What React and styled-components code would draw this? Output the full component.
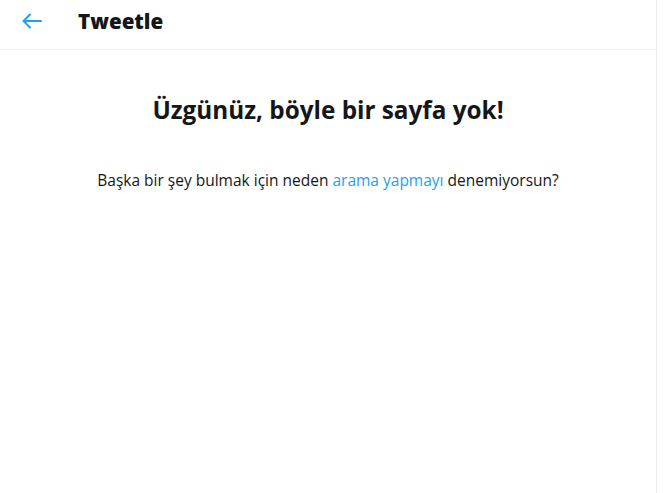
import React from "react";
import styled, { createGlobalStyle } from "styled-components";

const GlobalStyle = createGlobalStyle`
  html, body {
    margin: 0;
    padding: 0;
    background: #fff;
  }
  body {
    font-family: "Open Sans", "Noto Sans", sans-serif;
    color: #14171a;
  }
`;

const Column = styled.div`
  width: 656px;
  min-height: 493px;
  border-right: 1px solid #ebeef0;
  display: flex;
  flex-direction: column;
`;

const Header = styled.header`
  height: 41px;
  padding: 0 15px 8px 20px;
  border-bottom: 1px solid #ebeef0;
  display: flex;
  align-items: center;
`;

const BackButton = styled.button`
  width: 24px;
  height: 24px;
  border: none;
  background: transparent;
  padding: 0;
  display: flex;
  align-items: center;
  justify-content: center;
  color: #1da1f2;
  cursor: pointer;
  margin-right: 34px;
`;

const Title = styled.h2`
  margin: 0;
  font-size: 20.6px;
  font-weight: 800;
  color: #14171a;
`;

const Body = styled.main`
  display: flex;
  flex-direction: column;
  align-items: center;
  padding-top: 43px;
`;

const Heading = styled.h1`
  margin: 0;
  font-size: 24.3px;
  font-weight: 700;
  color: #14171a;
`;

const Text = styled.p`
  margin: 43px 0 0;
  font-size: 15.5px;
  color: #14171a;
`;

const Link = styled.a`
  color: #1da1f2;
  text-decoration: none;
`;

const ArrowIcon = () => (
  <svg width="24" height="24" viewBox="0 0 24 24" fill="none" stroke="currentColor" strokeWidth="2" strokeLinecap="round" strokeLinejoin="round">
    <path d="M21 12H4" />
    <path d="M10 5.5L3.5 12L10 18.5" />
  </svg>
);

export default function App() {
  return (
    <>
      <GlobalStyle />
      <Column>
        <Header>
          <BackButton aria-label="Geri">
            <ArrowIcon />
          </BackButton>
          <Title>Tweetle</Title>
        </Header>
        <Body>
          <Heading>Üzgünüz, böyle bir sayfa yok!</Heading>
          <Text>
            Başka bir şey bulmak için neden <Link href="#">arama yapmayı</Link>{" "}
            denemiyorsun?
          </Text>
        </Body>
      </Column>
    </>
  );
}
